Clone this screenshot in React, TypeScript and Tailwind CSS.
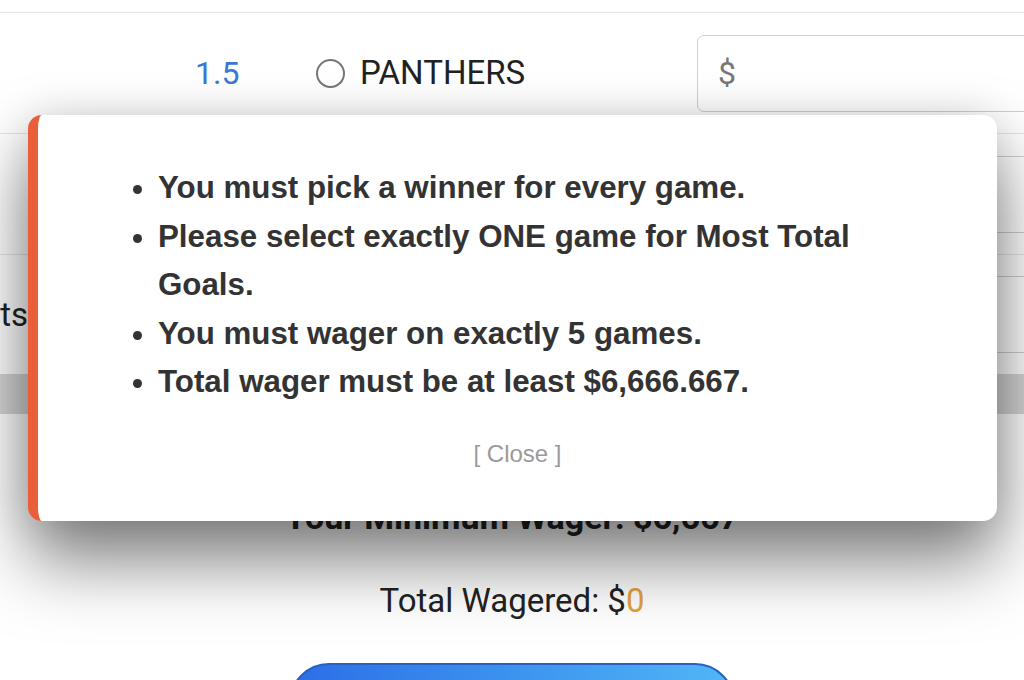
import React from 'react';

const errors = [
  'You must pick a winner for every game.',
  'Please select exactly ONE game for Most Total Goals.',
  'You must wager on exactly 5 games.',
  'Total wager must be at least $6,666.667.',
];

const WagerInput: React.FC = () => (
  <div className="w-[360px] h-[77px] shrink-0 flex items-center pl-[20px] border-[1.5px] border-[#cfcfcf] rounded-[7px] bg-white text-[32px] text-[#777]">
    $
  </div>
);

export default function App() {
  return (
    <div className="relative w-[1024px] h-[680px] overflow-hidden bg-white font-['Roboto',sans-serif] text-[#222]">
      <div className="h-[12px]" />

      <section className="border-t border-[#e6e6e6]">
        <div className="h-[120px] flex items-center overflow-hidden">
          <div className="w-[316px] shrink-0 pl-[195px] text-[32px] text-[#3a78d4]">1.5</div>
          <div className="w-[381px] shrink-0 flex items-center gap-[15px]">
            <span className="w-[29px] h-[29px] rounded-full border-2 border-[#777] bg-white" />
            <span className="text-[33px] text-[#222]">PANTHERS</span>
          </div>
          <WagerInput />
        </div>

        <div className="h-[121px] border-t border-[#e6e6e6] flex items-center justify-end overflow-hidden">
          <div className="w-[327px] shrink-0">
            <WagerInput />
          </div>
        </div>

        <div className="h-[120px] border-t border-[#e6e6e6] flex items-center overflow-hidden">
          <div className="w-[28px] shrink-0 overflow-hidden flex justify-end">
            <span className="whitespace-nowrap text-[33px]">Total Points</span>
          </div>
          <div className="ml-auto w-[327px] shrink-0">
            <WagerInput />
          </div>
        </div>

        <div className="h-[40px] bg-[#d6d6d6]" />
      </section>

      <main className="flex flex-col items-center pt-[83px]">
        <p className="font-bold text-[34px] leading-[40px] text-[#222]">Your Minimum Wager: $6,667</p>
        <p className="mt-[44px] text-[33px] leading-[40px] text-[#222]">
          Total Wagered: $<span className="text-[#e3a23c]">0</span>
        </p>
        <button className="mt-[42px] w-[446px] h-[80px] rounded-[40px] border-2 border-[#2a5fc4] bg-gradient-to-r from-[#2d6ee6] to-[#52b6f6]" />
      </main>

      {/* error modal */}
      <div className="absolute left-[28px] top-[115px] w-[969px] h-[406px] bg-white rounded-[14px] border-l-[10px] border-[#e85f3a] shadow-[0_40px_70px_rgba(0,0,0,0.5),0_0_40px_rgba(0,0,0,0.12)] font-['Liberation_Sans',Arial,sans-serif]">
        <ul className="list-disc ml-[120px] mr-[90px] pt-[49px] text-[31.3px] leading-[48.5px] font-bold text-[#333]">
          {errors.map((e) => (
            <li key={e}>{e}</li>
          ))}
        </ul>
        <div className="mt-[32px] text-center text-[24px] leading-[30px] text-[#9a9a9a]">[ Close ]</div>
      </div>
    </div>
  );
}
